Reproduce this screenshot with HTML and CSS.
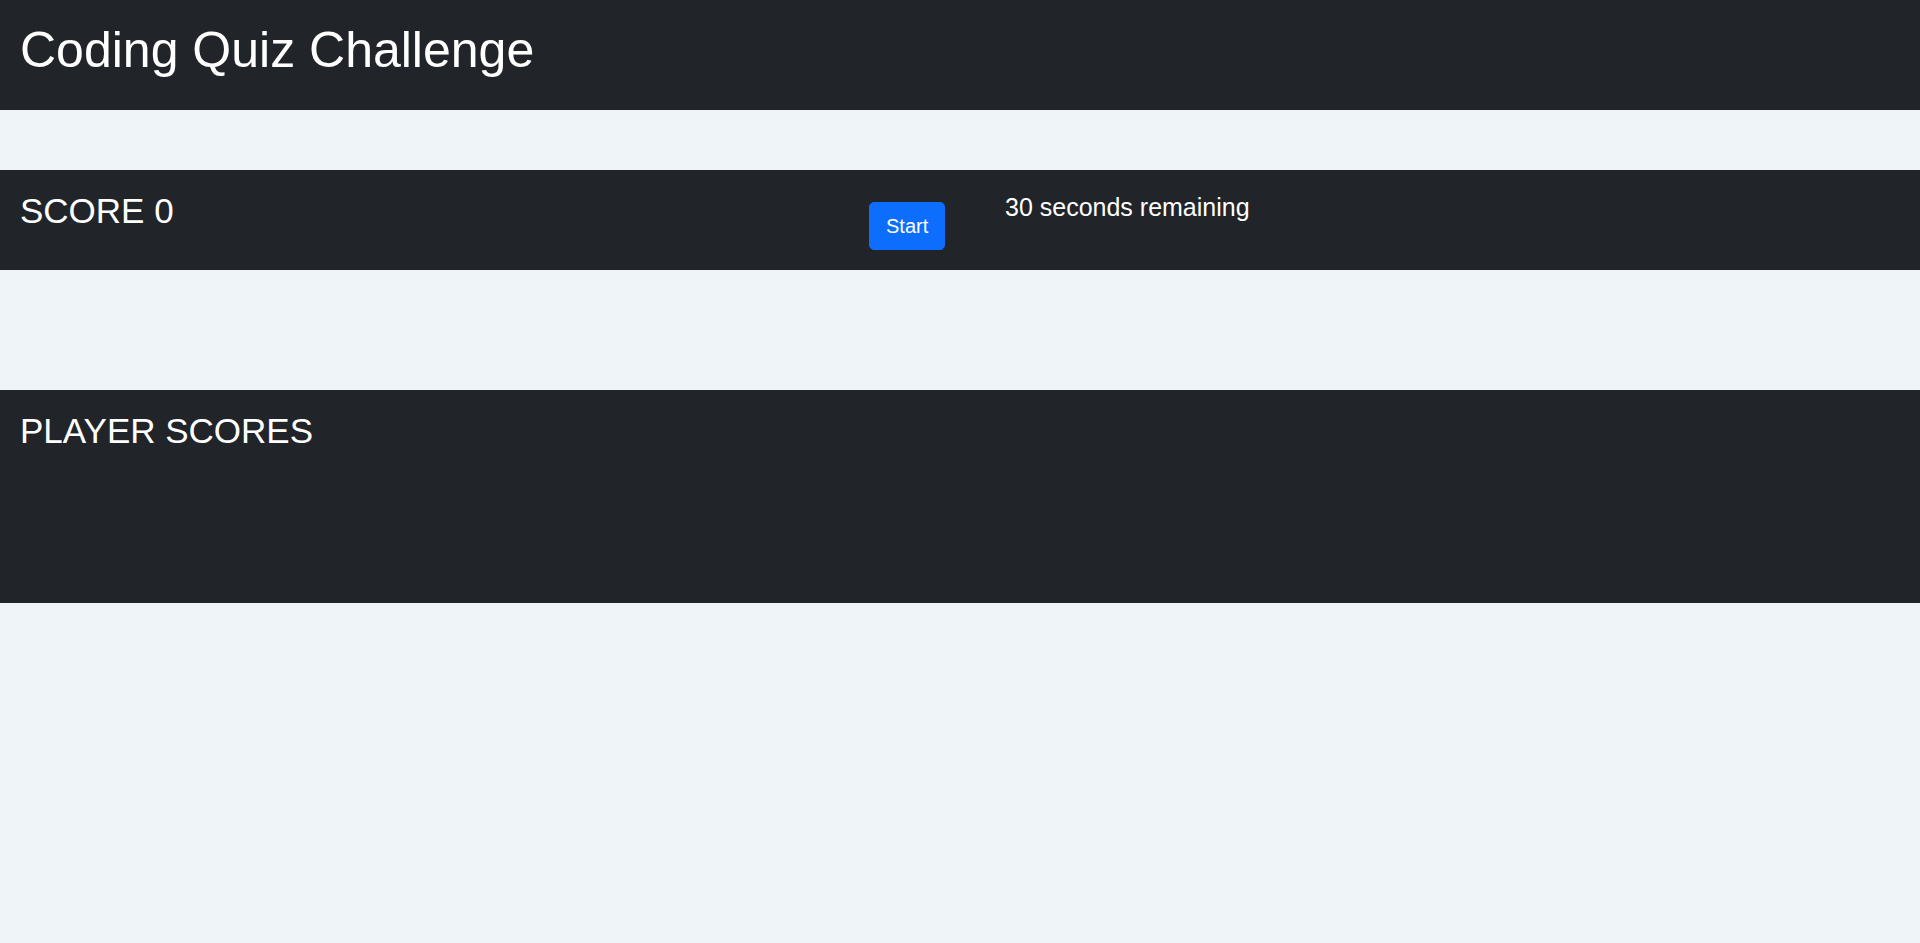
FILE: index.html
```html
<!DOCTYPE html>
<html lang="en">
<head>
<meta charset="utf-8">
<title>Coding Quiz Challenge</title>
<link rel="stylesheet" href="styles.css">
</head>
<body>
  <header class="site-header">
    <h1 class="title">Coding Quiz Challenge</h1>
  </header>
  <main>
    <section class="score-bar">
      <div class="score-col">
        <h3 class="heading">SCORE <span class="score-value">0</span></h3>
      </div>
      <div class="btn-col">
        <button class="btn-start" type="button">Start</button>
      </div>
      <div class="timer-col">
        <h5 class="timer">30 seconds remaining</h5>
      </div>
    </section>
    <section class="players">
      <h3 class="heading">PLAYER SCORES</h3>
      <ul class="player-list"></ul>
    </section>
  </main>
</body>
</html>
```
FILE: styles.css
```css
* { box-sizing: border-box; }
html, body {
  margin: 0;
  padding: 0;
}
body {
  background: #eff4f8;
  font-family: "Liberation Sans", Arial, sans-serif;
  color: #ffffff;
  min-height: 943px;
}
.site-header {
  background: #212529;
  padding: 20px 20px 20px;
  height: 110px;
}
.title {
  margin: 0;
  font-size: 50px;
  font-weight: 400;
  line-height: 1.2;
}
.score-bar {
  margin-top: 60px;
  background: #212529;
  height: 100px;
  padding: 20px 20px;
  display: flex;
  align-items: flex-start;
}
.score-col {
  width: 849px;
  flex: none;
}
.heading {
  margin: 0;
  font-size: 35px;
  font-weight: 400;
  line-height: 1.2;
}
.btn-col {
  flex: none;
  padding-top: 12px;
}
.btn-start {
  display: block;
  font-family: "Liberation Sans", Arial, sans-serif;
  font-size: 20px;
  line-height: 30px;
  color: #ffffff;
  background: #0d6efd;
  border: 1px solid #0d6efd;
  border-radius: 5px;
  padding: 8px 16px;
  height: 48px;
  width: 76px;
  cursor: pointer;
}
.timer-col {
  flex: none;
  margin-left: 60px;
  padding-top: 2px;
}
.timer {
  margin: 0;
  font-size: 25px;
  font-weight: 400;
  line-height: 1.2;
}
.players {
  margin-top: 120px;
  background: #212529;
  height: 213px;
  padding: 20px;
}
.player-list {
  list-style: none;
  margin: 0;
  padding: 0;
}
```
